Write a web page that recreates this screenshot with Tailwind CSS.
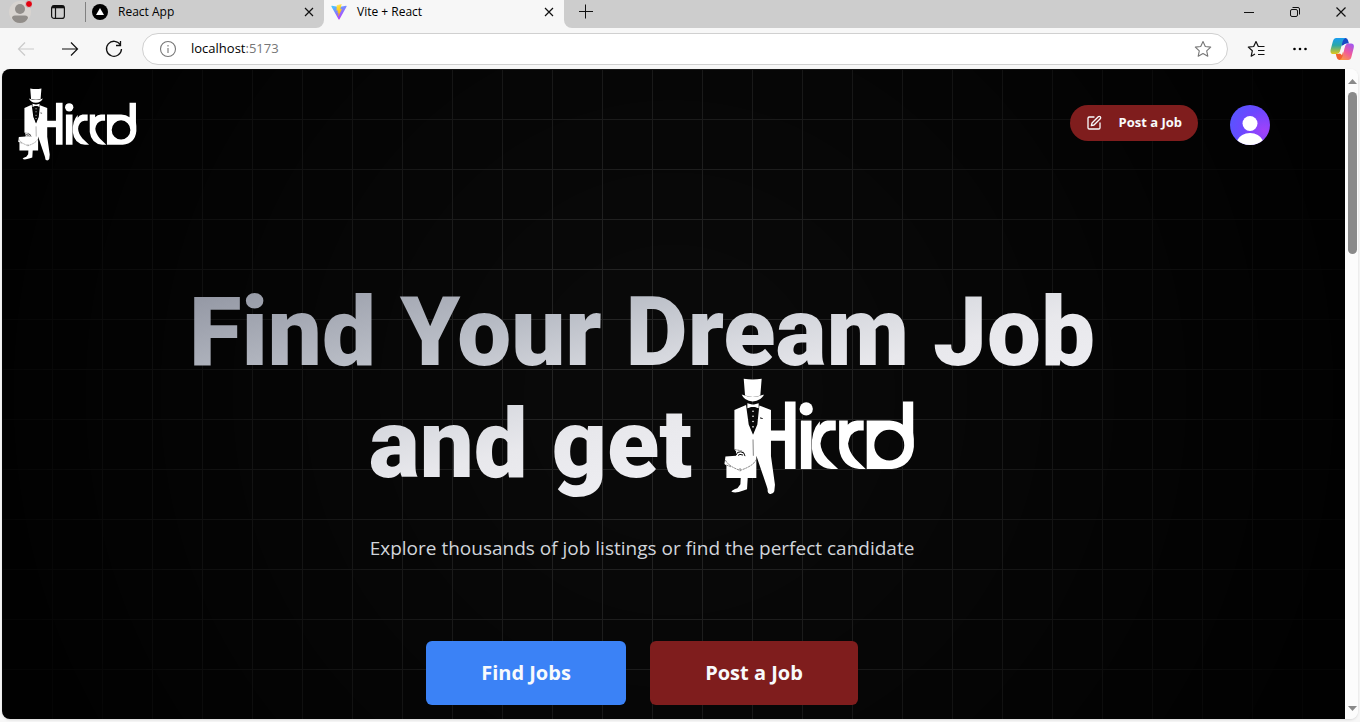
<!DOCTYPE html>
<html lang="en">
<head>
<meta charset="utf-8">
<meta name="viewport" content="width=device-width, initial-scale=1">
<title>Vite + React</title>
<script src="https://cdn.jsdelivr.net/npm/@tailwindcss/browser@4"></script>
</head>
<body class="flex h-screen flex-col overflow-hidden bg-[#f7f7f7] font-['Open_Sans','Noto_Sans',sans-serif] text-black">

<svg class="hidden" aria-hidden="true">
  <symbol id="logo" viewBox="60 25 574 352">
    <g fill="#fff">
      <path d="M119 27Q146 32 173 27L169 78Q146 86 123 78Z"/>
      <path d="M113 75Q145 90 180 75Q172 94 146 96Q120 94 113 75Z"/>
      <path d="M130 101L144 105H150L164 101V116L150 112H144L130 116Z"/>
      <path d="M126 106L134 165L147 196L160 165L166 108L201 121V183H243V96H275V299H243V214H201V260L213 346L211 366Q208 375 198 374Q190 372 191 360L188 350L157 259V326H131L129 360Q120 364 104 368Q91 371 82 367Q84 362 100 357L109 345L110 326H67V288L61 284L64 261L96 259V246L91 240V121Z"/>
      <circle cx="307" cy="118" r="20"/>
      <path d="M291 153H323V299H291Z"/>
      <path d="M348 155V168Q356 155 371 153H396V183H380Q353 187 350 222Q351 246 371 268L403 299H383Q331 294 324 237Q321 184 348 155Z"/>
      <path d="M406 153H432V166Q443 154 460 153H480V183H464Q438 188 433 222Q434 244 455 269L486 299H466Q413 292 406 237Z"/>
      <path fill-rule="evenodd" d="M489 153H558Q582 154 598 166V96H629V190Q632 208 631 232Q625 292 565 299H489ZM557 181A45 46 0 1 0 557 273A45 46 0 1 0 557 181Z"/>
    </g>
    <g fill="none" stroke="#080808" stroke-width="1.500">
      <path d="M96 257Q98 246 110 247Q122 248 123 260M102 258Q106 252 117 257" stroke-width="3"/>
      <path d="M64 272Q72 290 108 303Q148 290 157 270M67 287L80 292M108 296V306M91 240L112 244L120 250" stroke-dasharray="7 2"/>
      <path d="M168 145L176 147" stroke-width="3"/>
      <path d="M147 210L148 259"/>
    </g>
    <path d="M134 116L143 112H151L160 116L157 164L147 193L137 164Z" fill="#080808"/>
    <g fill="#fff"><circle cx="147" cy="125" r="2.500"/><circle cx="147" cy="140" r="2.500"/><circle cx="147" cy="156" r="2.500"/><circle cx="147" cy="172" r="2.500"/></g>
  </symbol>
</svg>

<!-- Tab strip -->
<div class="flex h-7 shrink-0 items-stretch bg-[#f7f7f7]">
  <div class="flex w-[324px] items-center rounded-br-lg bg-[#cdcdcd] pb-1">
    <button class="ml-2 h-6 w-6" aria-label="Profile">
      <svg class="h-6 w-6" viewBox="0 0 24 24"><circle cx="12" cy="12" r="11" fill="#d8d4d0"/><circle cx="12" cy="9" r="5" fill="#918d89"/><path d="M4 18Q4 15.500 7 15.500H17Q20 15.500 20 18Q18 23 12 23Q6 23 4 18Z" fill="#918d89"/><circle cx="21" cy="4" r="3.500" fill="#e3000f" stroke="#cdcdcd"/></svg>
    </button>
    <button class="ml-[18px] h-4 w-4" aria-label="Tab actions">
      <svg class="h-4 w-4" viewBox="0 0 16 16" fill="none" stroke="#111" stroke-width="1.200"><rect x="1.600" y="1.600" width="12.800" height="12.800" rx="2.500"/><path d="M2 3H14" stroke-width="2.600"/><path d="M5.500 4V14"/></svg>
    </button>
    <span class="ml-[19px] h-5 w-px bg-[#808080]"></span>
    <svg class="ml-1.5 h-4 w-4" viewBox="0 0 16 16"><circle cx="8" cy="8" r="8"/><path d="M8 4L12 11H4Z" fill="#fff"/></svg>
    <span class="ml-2.5 flex-1 text-xs">React App</span>
    <button class="mr-2 h-3.5 w-3.5" aria-label="Close React App"><svg viewBox="0 0 14 14" stroke="#111" stroke-width="1.200"><path d="M3 3L11 11M11 3L3 11"/></svg></button>
  </div>
  <div class="flex w-60 items-center bg-[#f7f7f7] pb-1">
    <svg class="ml-[7px] h-4 w-4" viewBox="0 0 32 32"><defs><linearGradient id="va" x1="0" y1="0" x2=".6" y2="1"><stop stop-color="#41d1ff"/><stop offset="1" stop-color="#bd34fe"/></linearGradient><linearGradient id="vb" x1=".4" y1="0" x2=".6" y2="1"><stop stop-color="#ffea83"/><stop offset=".2" stop-color="#ffdd35"/><stop offset="1" stop-color="#ffa800"/></linearGradient></defs><path fill="url(#va)" d="M31 5.500L17 30.500Q16 32 15 30.500L1 5.500Q0 3.500 2 3.700L16 6.200L30 3.700Q32 3.500 31 5.500Z"/><path fill="url(#vb)" d="M22.500 0L12 2Q11.500 2.200 11.500 2.700L11 13.500L14 13L13 18L15.500 17.300L14 24Q14 25 15 24L22 10L18.500 10.600L21 1Z"/></svg>
    <span class="ml-2.5 flex-1 text-xs">Vite + React</span>
    <button class="mr-2 h-3.5 w-3.5" aria-label="Close Vite + React"><svg viewBox="0 0 14 14" stroke="#111" stroke-width="1.200"><path d="M3 3L11 11M11 3L3 11"/></svg></button>
  </div>
  <div class="flex flex-1 items-center rounded-bl-lg bg-[#cdcdcd] pb-1">
    <button class="ml-3.5 h-4 w-4" aria-label="New tab"><svg viewBox="0 0 16 16" stroke="#111" stroke-width="1"><path d="M1 7.500H15M7.500 0.500V14.500"/></svg></button>
    <div class="ml-auto flex items-center gap-[30px] pr-[11px]">
      <button class="h-4 w-4" aria-label="Minimize"><svg viewBox="0 0 16 16" stroke="#111"><path d="M3 8.500H13"/></svg></button>
      <button class="h-4 w-4" aria-label="Restore"><svg viewBox="0 0 16 16" fill="none" stroke="#111"><rect x="3.500" y="5.500" width="7" height="7" rx="1.500"/><path d="M5.500 3.500H11Q12.500 3.500 12.500 5V10.500"/></svg></button>
      <button class="h-4 w-4" aria-label="Close window"><svg viewBox="0 0 16 16" stroke="#111" stroke-width="1.200"><path d="M3.500 3.500L12.500 12.500M12.500 3.500L3.500 12.500"/></svg></button>
    </div>
  </div>
</div>

<!-- Toolbar -->
<div class="flex h-[41px] shrink-0 items-center">
  <button class="ml-[17px] h-[18px] w-[18px]" aria-label="Back"><svg viewBox="0 0 18 18" fill="none" stroke="#cacaca" stroke-width="1.200"><path d="M17 9H1.500M8 2.500L1.500 9L8 15.500"/></svg></button>
  <button class="ml-[26px] h-[18px] w-[18px]" aria-label="Forward"><svg viewBox="0 0 18 18" fill="none" stroke="#111" stroke-width="1.200"><path d="M1 9H16.500M10 2.500L16.500 9L10 15.500"/></svg></button>
  <button class="ml-[26px] h-[18px] w-[18px]" aria-label="Reload"><svg viewBox="0 0 18 18" fill="none" stroke="#111" stroke-width="1.300"><path d="M15.500 5A7.500 7.500 0 1 0 16.500 9M15.500 1V5.500H11"/></svg></button>
  <div class="ml-[19px] flex h-8 flex-1 items-center rounded-full border border-[#d0d0d0] bg-white">
    <svg class="ml-4 h-[18px] w-[18px]" viewBox="0 0 18 18" fill="none" stroke="#777" stroke-width="1.100"><circle cx="9" cy="9" r="7.500"/><path d="M9 8V13M9 5V6.500"/></svg>
    <a href="#" class="ml-3.5 flex-1 text-[13px] text-black">localhost<span class="text-[#767676]">:5173</span></a>
    <button class="mr-[15px] h-[18px] w-[18px]" aria-label="Favorite this page"><svg viewBox="0 0 18 18" fill="none" stroke="#777" stroke-width="1.100" stroke-linejoin="round"><path d="M9 1.500L11.300 6.500L16.700 7.100L12.700 10.800L13.800 16.200L9 13.500L4.200 16.200L5.300 10.800L1.300 7.100L6.700 6.500Z"/></svg></button>
  </div>
  <button class="ml-[19px] h-[18px] w-[18px]" aria-label="Favorites"><svg viewBox="0 0 18 18" fill="none" stroke="#111" stroke-width="1.200" stroke-linejoin="round"><path d="M12 6.500L11.300 6.500L9 1.500L6.700 6.500L1.300 7.100L5.300 10.800L4.200 16.200L8 14M11.500 6.500H17.500M11 10.500H17.500M11 14.500H17.500"/></svg></button>
  <button class="ml-[26px] h-[18px] w-[18px]" aria-label="Settings and more"><svg viewBox="0 0 18 18"><circle cx="3.500" cy="9" r="1.300"/><circle cx="9" cy="9" r="1.300"/><circle cx="14.500" cy="9" r="1.300"/></svg></button>
  <button class="mr-1.5 ml-[21px] h-6 w-6" aria-label="Copilot">
    <svg class="h-6 w-6" viewBox="-1 -2 66 66"><defs><linearGradient id="ca" x1="0" y1="0" x2="0" y2="1"><stop stop-color="#1a9df0"/><stop offset=".45" stop-color="#2ba7a8"/><stop offset="1" stop-color="#e5c817"/></linearGradient><linearGradient id="cb" x1=".8" y1="0" x2=".2" y2="1"><stop stop-color="#a457ef"/><stop offset=".5" stop-color="#f0589d"/><stop offset="1" stop-color="#fb9a45"/></linearGradient></defs><path d="M32 1H42Q47 1 49 8L51 16H45Q39 16 37 22L33 30L28 10Z" fill="#1749c4"/><path d="M34 61H24Q19 61 17 53L15 45H21Q27 45 29 38L33 32L38 50Z" fill="#f2602f"/><path d="M16 1H42Q36 3 34 10L27 36Q24 45 17 45H9Q-2 45 1 32L7 10Q10 1 16 1Z" fill="url(#ca)"/><path d="M49 61H24Q31 59 33 52L40 25Q43 16 50 16H57Q67 16 64 29L58 52Q56 61 49 61Z" fill="url(#cb)"/><path d="M36 20L42 16.500Q40 19 39 24L32 48Q29 45 25 43Q27 41 28 36L31 24Q32 21 36 20Z" fill="#f7f7f7"/></svg>
  </button>
</div>

<!-- Page viewport -->
<div class="mx-[2px] mb-[3px] flex min-h-0 flex-1 overflow-hidden rounded-lg bg-white shadow">
  <div class="relative isolate flex-1 overflow-hidden bg-black">
    <div class="absolute inset-0 -z-10 bg-[#090909] bg-[linear-gradient(to_right,#242424_1px,transparent_1px),linear-gradient(to_bottom,#242424_1px,transparent_1px)] bg-[size:50px_50px] [mask-image:radial-gradient(circle_at_center,#000_15%,rgb(0_0_0/.15)_90%)]"></div>
    <div class="max-w-7xl">
      <header class="flex items-start pt-[19px] pr-3 pl-4">
        <a href="#" aria-label="Hirrd home"><svg class="h-[73px] w-[119px]"><use href="#logo"/></svg></a>
        <button class="mt-[17px] ml-auto flex h-9 items-center gap-4 rounded-full bg-[#7f1d1d] px-4 text-[13px] font-bold text-[#f8fafc]">
          <svg class="h-4 w-4" viewBox="0 0 24 24" fill="none" stroke="currentColor" stroke-width="2" stroke-linecap="round" stroke-linejoin="round"><path d="M12 3H5a2 2 0 0 0-2 2v14a2 2 0 0 0 2 2h14a2 2 0 0 0 2-2v-7"/><path d="M18.375 2.625a2.121 2.121 0 1 1 3 3L12 15l-4 1 1-4Z"/></svg>
          Post a Job
        </button>
        <button class="mt-[17px] ml-8 h-10 w-10 overflow-hidden rounded-full bg-[radial-gradient(circle_at_85%_65%,#a142fa,#6c47ff_50%,#4f5bff)]" aria-label="Account">
          <svg viewBox="0 0 40 40" fill="#fff"><circle cx="20" cy="18.500" r="7.500"/><path d="M7 35.500Q11 28 20 28Q29 28 33 35.500L28 40H12Z"/></svg>
        </button>
      </header>
      <main class="flex flex-col items-center pt-[115px]">
        <h1 class="flex flex-col items-center bg-[linear-gradient(to_bottom_right,#8d919e_0%,#b8bcc5_28%,#d6d8de_44%,#e8e8ec_57%,#ececf0_68%,#f8f8fa_100%)] bg-clip-text font-['Roboto','Open_Sans',sans-serif] text-8xl leading-[112px] font-black text-transparent">
          <span class="whitespace-nowrap">Find Your Dream Job</span>
          <span class="flex h-28 items-start gap-8">and get <svg class="-mt-2.5 h-[117px] w-[191px]" role="img" aria-label="Hirrd"><use href="#logo"/></svg></span>
        </h1>
        <p class="mt-[34px] text-[19px] leading-7 text-[#d1d5db]">Explore thousands of job listings or find the perfect candidate</p>
        <div class="mt-[79px] flex gap-6">
          <button class="h-16 w-[200px] rounded-md bg-[#3b82f6] text-xl font-bold text-[#f8fafc]">Find Jobs</button>
          <button class="h-16 w-52 rounded-md bg-[#7f1d1d] text-xl font-bold text-[#f8fafc]">Post a Job</button>
        </div>
      </main>
    </div>
  </div>
  <div class="flex w-[13px] shrink-0 flex-col items-center bg-[#fcfcfc] pt-2.5 pb-2 pl-0.5">
    <svg class="h-[5px] w-[9px]" viewBox="0 0 9 5" fill="#8a8a8a"><path d="M0 5L4.500 0L9 5Z"/></svg>
    <div class="mt-2 h-[162px] w-[9px] rounded-full bg-[#8a8a8a]"></div>
    <svg class="mt-auto h-[5px] w-[9px]" viewBox="0 0 9 5" fill="#8a8a8a"><path d="M0 0L4.500 5L9 0Z"/></svg>
  </div>
</div>
</body>
</html>
